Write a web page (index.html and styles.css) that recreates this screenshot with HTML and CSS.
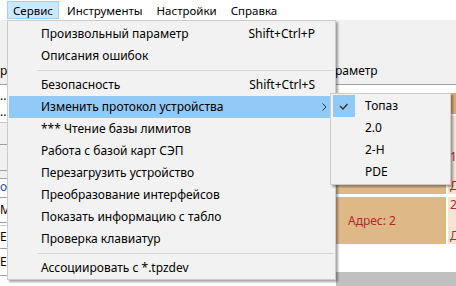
FILE: index.html
```html
<!DOCTYPE html>
<html lang="ru">
<head>
    <meta charset="UTF-8">
    <title>Сервис</title>
    <link rel="stylesheet" href="styles.css">
</head>
<body>
    <div class="menubar">
        <span class="mb-item open">Сервис</span>
        <span class="mb-item">Инструменты</span>
        <span class="mb-item">Настройки</span>
        <span class="mb-item">Справка</span>
    </div>

    <div class="params">
        <span class="label">ра</span>
        <span class="label right">раметр</span>
    </div>
    <div class="work">
        <div class="side">
            <div class="srow r1"><span>...</span><span>...</span></div>
            <div class="srow r2"></div>
            <div class="srow r3"></div>
            <div class="srow r4"></div>
            <div class="srow r5"><span class="blue">оп</span></div>
            <div class="srow r6"><span>M</span></div>
            <div class="srow r7"></div>
            <div class="srow r8"><span>E</span></div>
            <div class="srow r9"><span>E</span></div>
            <div class="srow rest"></div>
        </div>
        <div class="main">
            <div class="grid">
                <div class="grow head">
                    <div class="cell addr"></div>
                    <div class="cell info"></div>
                </div>
                <div class="grow first">
                    <div class="cell addr"></div>
                    <div class="cell info"><span>1</span><span>Д</span></div>
                </div>
                <div class="grow second">
                    <div class="cell addr">Адрес: 2</div>
                    <div class="cell info"><span>2</span><span>Д</span></div>
                </div>
            </div>
            <div class="status"></div>
        </div>
    </div>

    <!-- открытое меню "Сервис" -->
    <div class="menu main-menu">
        <div class="item"><span></span><span>Произвольный параметр</span><span class="key">Shift+Ctrl+P</span><span></span></div>
        <div class="item"><span></span><span>Описания ошибок</span><span></span><span></span></div>
        <div class="sep"></div>
        <div class="item"><span></span><span>Безопасность</span><span class="key">Shift+Ctrl+S</span><span></span></div>
        <div class="item active"><span></span><span>Изменить протокол устройства</span><span></span>
            <span class="arrow"><svg width="5" height="8" viewBox="0 0 5 8"><path d="M0.5 0.5 L4 4 L0.5 7.5" fill="none" stroke="#333" stroke-width="1"/></svg></span>
        </div>
        <div class="item"><span></span><span>*** Чтение базы лимитов</span><span></span><span></span></div>
        <div class="item"><span></span><span>Работа с базой карт СЭП</span><span></span><span></span></div>
        <div class="item"><span></span><span>Перезагрузить устройство</span><span></span><span></span></div>
        <div class="item"><span></span><span>Преобразование интерфейсов</span><span></span><span></span></div>
        <div class="item"><span></span><span>Показать информацию с табло</span><span></span><span></span></div>
        <div class="item"><span></span><span>Проверка клавиатур</span><span></span><span></span></div>
        <div class="sep"></div>
        <div class="item"><span></span><span>Ассоциировать с *.tpzdev</span><span></span><span></span></div>
    </div>

    <div class="menu sub-menu">
        <div class="sitem"><span class="check on"><svg width="22" height="22" viewBox="0 0 22 22"><path d="M7 11 L10 14 L14.5 9" fill="none" stroke="#333" stroke-width="1.3"/></svg></span><span>Топаз</span></div>
        <div class="sitem"><span class="check"></span><span>2.0</span></div>
        <div class="sitem"><span class="check"></span><span>2-H</span></div>
        <div class="sitem"><span class="check"></span><span>PDE</span></div>
    </div>
</body>
</html>
```

FILE: styles.css
```css
html {
    background: #fff;
}
body {
    margin: 0;
    width: 456px;
    height: 286px;
    overflow: hidden;
    position: relative;
    display: grid;
    grid-template-rows: 20px 65px 201px;
    font-family: "Noto Sans", "Liberation Sans", sans-serif;
    font-size: 12px;
    color: #000;
    background: #fff;
}

/* строка меню */
.menubar {
    display: flex;
    gap: 2px;
    padding: 1px 0 0 7px;
    background: #fff;
    font-size: 11.5px;
}
.mb-item {
    height: 18px;
    line-height: 17px;
    padding: 0 5px;
    border: 1px solid transparent;
    box-sizing: border-box;
}
.mb-item.open {
    background: #cce8ff;
    border-color: #99d1ff;
}

/* окно под меню */
.params {
    display: flex;
    align-items: flex-end;
    padding-bottom: 5px;
    background: #f0f0f0;
    border-bottom: 1px solid #a0a0a0;
}
.label {
    width: 7px;
    overflow: hidden;
    white-space: nowrap;
    line-height: 16px;
}
.label.right {
    margin-left: auto;
    width: 121px;
}
.work {
    display: grid;
    grid-template-columns: 336px 120px;
}
.side {
    display: flex;
    flex-direction: column;
    background: #fff;
    overflow: hidden;
}
.srow {
    border-bottom: 1px solid #a0a0a0;
    display: flex;
    flex-direction: column;
    justify-content: center;
    line-height: 14px;
    box-sizing: border-box;
    flex-shrink: 0;
}
.srow span {
    width: 7px;
    overflow: hidden;
    white-space: nowrap;
}
.srow.r1 { height: 38px; line-height: 16px; border-color: #c8c8c8; }
.srow.r2 { height: 22px; background: #f0f0f0; }
.srow.r3 { height: 26px; background: #f0f0f0; }
.srow.r4 { height: 8px; background: #f0f0f0; }
.srow.r5 { height: 19px; justify-content: flex-start; padding-top: 1px; }
.srow.r6 { height: 25px; }
.srow.r7 { height: 3px; border-color: #c8c8c8; }
.srow.r8 { height: 23px; }
.srow.r9 { height: 27px; }
.srow.rest { flex: 1; border-bottom: none; }
.blue {
    color: #1e50a0;
}
.main {
    display: grid;
    grid-template-rows: 187px 14px;
    background: #fff;
    overflow: hidden;
}
.grid {
    display: flex;
    flex-direction: column;
    padding-top: 8px;
}
.grow {
    display: flex;
    gap: 2px;
    flex-shrink: 0;
}
.grow.head {
    height: 21px;
}
.grow.head .cell {
    background: #d9aa6e;
}
.grow.first {
    height: 78px;
    margin-top: 2px;
}
.grow.second {
    height: 47px;
    margin-top: 3px;
}
.cell {
    color: #b5262d;
}
.addr {
    width: 110px;
    box-sizing: border-box;
    background: #deb887;
    display: flex;
    align-items: center;
    padding-left: 12px;
}
.info {
    flex: 1;
    background: #f5e4d2;
    display: flex;
    flex-direction: column;
    justify-content: space-between;
    padding-left: 2px;
    line-height: 16px;
}
.first .info {
    padding-top: 33px;
}
.status {
    background: #c0c0c0;
}

/* выпадающее меню */
.menu {
    position: absolute;
    background: #f2f2f2;
    border: 1px solid #cccccc;
    box-sizing: border-box;
    box-shadow: 2px 2px 2px rgba(0, 0, 0, 0.35);
}
.main-menu {
    left: 7px;
    top: 20px;
    width: 329px;
    padding: 2px 1px 0;
}
.item {
    display: grid;
    grid-template-columns: 32px 1fr auto 19px;
    height: 22px;
    line-height: 22px;
}
.item.active {
    background: #91c9f7;
}
.key {
    padding-left: 10px;
}
.arrow {
    display: flex;
    align-items: center;
    padding-left: 7px;
}
.sep {
    height: 7px;
    margin-left: 28px;
    display: flex;
    align-items: center;
}
.sep::after {
    content: "";
    flex: 1;
    height: 1px;
    background: #d7d7d7;
}
.sub-menu {
    left: 330px;
    top: 93px;
    width: 121px;
    padding: 1px 2px;
}
.sitem {
    display: flex;
    height: 22px;
    line-height: 22px;
}
.check {
    width: 22px;
    height: 22px;
    margin-right: 10px;
}
.check.on {
    background: #91c9f7;
}
.check svg {
    display: block;
}
```
